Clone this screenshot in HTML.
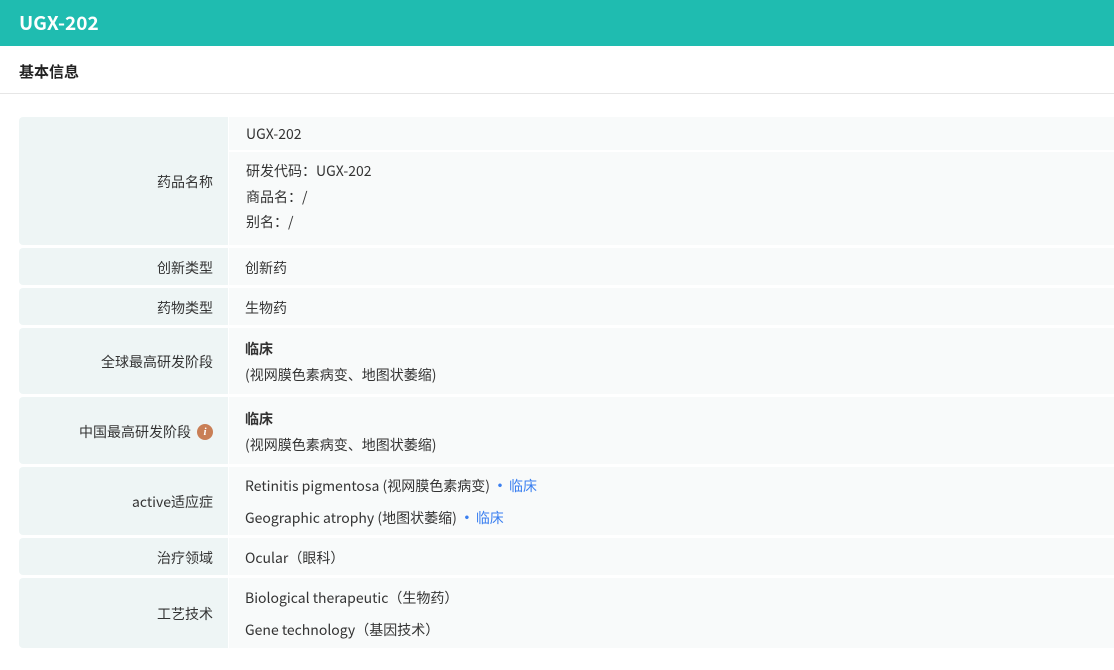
<!DOCTYPE html>
<html><head><meta charset="utf-8"><style>
*{margin:0;padding:0;box-sizing:border-box}
body{width:1114px;height:670px;overflow:hidden;background:#fff;font-family:"Noto Sans CJK SC","Liberation Sans",sans-serif;color:#333;font-size:14px}
.hd{height:46px;background:#1fbcb0;color:#fff;font-weight:bold;font-size:19px;line-height:46px;padding-left:19px}
.sec{height:48px;border-bottom:1px solid #e6e6e6;font-weight:bold;font-size:15px;line-height:52px;padding-left:19px;color:#222}
.tb{position:absolute;left:19px;top:117px;right:0}
.r{display:flex;margin-bottom:3px}
.l{width:209px;background:#eef5f5;text-align:right;padding-right:15px;display:flex;align-items:center;justify-content:flex-end;border-radius:4px 0 0 4px;padding-top:2px}
.v{flex:1;background:#f8fafa;margin-left:1px;padding-left:16px;display:flex;flex-direction:column;justify-content:center;padding-top:2px}
.b{font-weight:bold}
.blue{color:#3a7ff0}
.dot{font-weight:bold;margin:0 2px 0 3px}
.i{display:inline-block;width:16px;height:16px;border-radius:50%;background:#c97f56;color:#fff;font-size:11px;font-style:italic;font-weight:bold;text-align:center;line-height:16px;margin-left:6px;font-family:"Liberation Serif",serif}
</style></head><body>
<div class="hd">UGX-202</div>
<div class="sec">基本信息</div>
<div class="tb">
<div class="r" style="height:128px"><div class="l">药品名称</div><div class="v" style="background:none;padding:0;justify-content:flex-start">
<div style="background:#f8fafa;height:33px;line-height:35px;padding-left:17px">UGX-202</div>
<div style="background:#f8fafa;height:93px;margin-top:2px;padding:7px 0 0 17px;line-height:25.5px">研发代码：UGX-202<br>商品名：/<br>别名：/</div></div></div>
<div class="r" style="height:37px"><div class="l">创新类型</div><div class="v">创新药</div></div>
<div class="r" style="height:37px"><div class="l">药物类型</div><div class="v">生物药</div></div>
<div class="r" style="height:66px"><div class="l">全球最高研发阶段</div><div class="v" style="line-height:26px"><span class="b">临床</span><span>(视网膜色素病变、地图状萎缩)</span></div></div>
<div class="r" style="height:67px"><div class="l">中国最高研发阶段<span class="i">i</span></div><div class="v" style="line-height:26px"><span class="b">临床</span><span>(视网膜色素病变、地图状萎缩)</span></div></div>
<div class="r" style="height:68px"><div class="l">active适应症</div><div class="v" style="line-height:32px"><span>Retinitis pigmentosa (视网膜色素病变)<span class="blue"><span class="dot">•</span>临床</span></span><span>Geographic atrophy (地图状萎缩)<span class="blue"><span class="dot">•</span>临床</span></span></div></div>
<div class="r" style="height:37px"><div class="l">治疗领域</div><div class="v">Ocular（眼科）</div></div>
<div class="r" style="height:70px"><div class="l">工艺技术</div><div class="v" style="line-height:32px"><span>Biological therapeutic（生物药）</span><span>Gene technology（基因技术）</span></div></div>
</div>
</body></html>
